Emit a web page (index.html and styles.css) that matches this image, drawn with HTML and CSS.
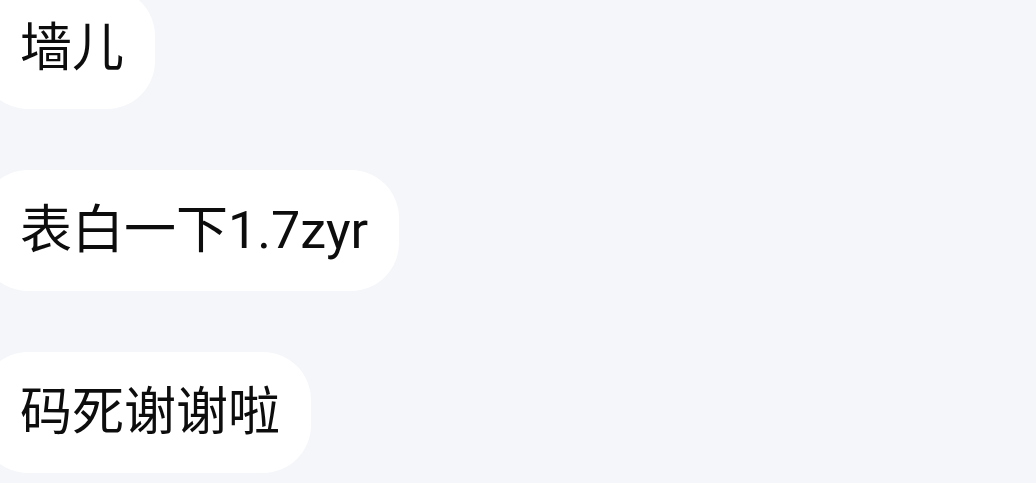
FILE: index.html
```html
<!DOCTYPE html>
<html lang="zh-CN">
<head>
<meta charset="utf-8">
<link rel="stylesheet" href="styles.css">
</head>
<body>
<main class="chat">
  <div class="bubble">墙儿</div>
  <div class="bubble">表白一下1.7zyr</div>
  <div class="bubble">码死谢谢啦</div>
</main>
</body>
</html>
```
FILE: styles.css
```css
html, body {
  margin: 0;
  padding: 0;
  background: #f5f6fa;
  height: 100%;
  overflow: hidden;
}
.chat {
  display: flex;
  flex-direction: column;
  align-items: flex-start;
  gap: 61px;
  margin-top: -12px;
  margin-left: -20px;
}
.bubble {
  background: #ffffff;
  color: #0d0d0d;
  font-family: Roboto, "Noto Sans CJK SC", sans-serif;
  font-size: 52px;
  line-height: 51px;
  padding: 35px 31px 35px 40px;
  border-radius: 48px;
  white-space: nowrap;
}
```
